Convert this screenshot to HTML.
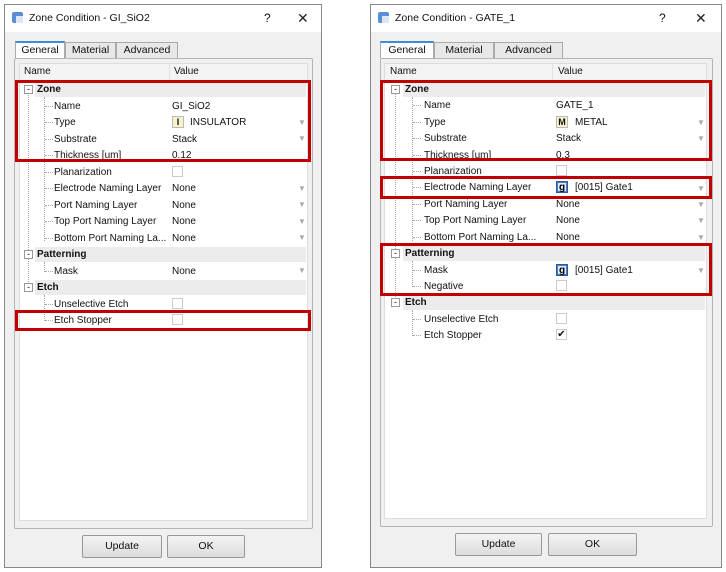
<!DOCTYPE html><html><head><style>
*{margin:0;padding:0;box-sizing:border-box}
body{width:726px;height:572px;background:#fff;position:relative;overflow:hidden;font-family:"Liberation Sans",sans-serif;font-size:10px;color:#111}
.a{position:absolute}
.dlg{position:absolute;background:#f0f0f0;border:1px solid #888}
.tb{position:absolute;left:0;right:0;top:0;height:27px;background:#fff}
.tab{position:absolute;height:16px;border:1px solid #aaa;border-bottom:none;background:#e8e8e8;text-align:center;line-height:15px;font-size:10.5px}
.tab.s{background:#fff;border-top:2px solid #3c8ddb;height:17px}
.pan{position:absolute;border:1px solid #b5b5b5;background:#f0f0f0;border-radius:2px}
.tree{position:absolute;background:#fff;border:1px solid #ddd}
.hdr{position:absolute;left:0;right:0;top:0;height:17px;background:#f4f4f4;border-bottom:1px solid #e2e2e2}
.t{position:absolute;white-space:nowrap;line-height:14px;top:0}
.g{position:absolute;background:#ececec;height:15px}
.red{position:absolute;border:3px solid #c00000}
.btn{position:absolute;border:1px solid #999;background:linear-gradient(#f4f4f4,#dcdcdc);border-radius:2px;text-align:center;font-size:10.5px}
.cb{position:absolute;width:11px;height:11px;border:1px solid #ccc;background:#fff}
.ar{position:absolute;color:#aaa;font-size:8px}
.vl{position:absolute;border-left:1px dotted #aaa}
.hl{position:absolute;border-top:1px dotted #aaa;width:8px}
.pm{position:absolute;width:9px;height:9px;border:1px solid #999;background:#fff;font-size:9px;line-height:6px;text-align:center}
.ic{position:absolute;width:12px;height:12px;border:1px solid #bbb;background:#f7f2c8;font-size:9px;font-weight:bold;text-align:center;line-height:10px}
.ig{position:absolute;width:12px;height:12px;background:#4a7fc0;border:1px solid #2b5a99;font-size:10px;font-weight:bold;text-align:center;line-height:9px;color:#000}
.ig i{display:block;background:#dfe9f7;margin:1px;height:8px;font-style:normal}
.x{position:absolute;font-size:14px;font-weight:normal;color:#222;line-height:14px}
.tr{margin-top:1px}
</style></head><body>

<!-- LEFT DIALOG -->
<div class="dlg" style="left:4px;top:4px;width:318px;height:564px">
 <div class="tb"></div>
</div>
<div class="a" style="left:12px;top:12px;width:11px;height:11px;background:#5a8fd6;border-radius:2px"></div>
<div class="a" style="left:16px;top:16px;width:7px;height:7px;background:#dbe6f4"></div>
<div class="t" style="left:29px;top:11px;font-size:10.5px">Zone Condition - GI_SiO2</div>
<div class="t" style="left:264px;top:11px;font-size:12px">?</div>
<div class="x" style="left:297px;top:11px">✕</div>
<div class="tab" style="left:65px;top:42px;width:51px">Material</div>
<div class="tab" style="left:116px;top:42px;width:62px">Advanced</div>
<div class="pan" style="left:14px;top:58px;width:299px;height:471px"></div>
<div class="tab s" style="left:15px;top:41px;width:50px">General</div>
<div class="tree" style="left:19px;top:63px;width:289px;height:458px"><div class="hdr"></div></div>
<div class="a" style="left:169px;top:64px;width:1px;height:16px;background:#e2e2e2"></div>
<div class="t" style="left:24px;top:65px">Name</div>
<div class="t" style="left:174px;top:65px">Value</div>

<div class="g" style="left:35px;top:82px;width:271px"></div>
<div class="g" style="left:35px;top:247px;width:271px"></div>
<div class="g" style="left:35px;top:280px;width:271px"></div>
<div class="vl" style="left:28px;top:92px;height:200px"></div>
<div class="vl" style="left:44px;top:97px;height:144px"></div>
<div class="vl" style="left:44px;top:262px;height:10px"></div>
<div class="vl" style="left:44px;top:295px;height:26px"></div>
<div class="pm" style="left:24px;top:85px">-</div>
<div class="pm" style="left:24px;top:250px">-</div>
<div class="pm" style="left:24px;top:283px">-</div>
<div class="t" style="left:37px;top:83px;font-weight:bold">Zone</div>
<div class="t" style="left:37px;top:248px;font-weight:bold">Patterning</div>
<div class="t" style="left:37px;top:281px;font-weight:bold">Etch</div>

<div class="hl" style="left:45px;top:106px"></div><div class="t" style="left:54px;top:100px">Name</div><div class="t" style="left:172px;top:100px">GI_SiO2</div>
<div class="hl" style="left:45px;top:122px"></div><div class="t" style="left:54px;top:116px">Type</div><div class="ic" style="left:172px;top:116px">I</div><div class="t" style="left:190px;top:116px">INSULATOR</div><div class="ar" style="left:298px;top:118px">▼</div>
<div class="hl" style="left:45px;top:139px"></div><div class="t" style="left:54px;top:133px">Substrate</div><div class="t" style="left:172px;top:133px">Stack</div><div class="ar" style="left:298px;top:134px">▼</div>
<div class="hl" style="left:45px;top:155px"></div><div class="t" style="left:54px;top:149px">Thickness [um]</div><div class="t" style="left:172px;top:149px">0.12</div>
<div class="hl" style="left:45px;top:172px"></div><div class="t" style="left:54px;top:166px">Planarization</div><div class="cb" style="left:172px;top:166px"></div>
<div class="hl" style="left:45px;top:188px"></div><div class="t" style="left:54px;top:182px">Electrode Naming Layer</div><div class="t" style="left:172px;top:182px">None</div><div class="ar" style="left:298px;top:184px">▼</div>
<div class="hl" style="left:45px;top:205px"></div><div class="t" style="left:54px;top:199px">Port Naming Layer</div><div class="t" style="left:172px;top:199px">None</div><div class="ar" style="left:298px;top:200px">▼</div>
<div class="hl" style="left:45px;top:221px"></div><div class="t" style="left:54px;top:215px">Top Port Naming Layer</div><div class="t" style="left:172px;top:215px">None</div><div class="ar" style="left:298px;top:217px">▼</div>
<div class="hl" style="left:45px;top:238px"></div><div class="t" style="left:54px;top:232px">Bottom Port Naming La...</div><div class="t" style="left:172px;top:232px">None</div><div class="ar" style="left:298px;top:233px">▼</div>
<div class="hl" style="left:45px;top:271px"></div><div class="t" style="left:54px;top:265px">Mask</div><div class="t" style="left:172px;top:265px">None</div><div class="ar" style="left:298px;top:266px">▼</div>
<div class="hl" style="left:45px;top:304px"></div><div class="t" style="left:54px;top:298px">Unselective Etch</div><div class="cb" style="left:172px;top:298px"></div>
<div class="hl" style="left:45px;top:320px"></div><div class="t" style="left:54px;top:314px">Etch Stopper</div><div class="cb" style="left:172px;top:314px"></div>

<div class="red" style="left:15px;top:80px;width:296px;height:82px"></div>
<div class="red" style="left:15px;top:310px;width:296px;height:21px"></div>

<div class="btn" style="left:82px;top:535px;width:80px;height:23px;line-height:21px">Update</div>
<div class="btn" style="left:167px;top:535px;width:78px;height:23px;line-height:21px">OK</div>

<!-- RIGHT DIALOG -->
<div class="dlg" style="left:370px;top:4px;width:352px;height:564px">
 <div class="tb"></div>
</div>
<div class="a" style="left:378px;top:12px;width:11px;height:11px;background:#5a8fd6;border-radius:2px"></div>
<div class="a" style="left:382px;top:16px;width:7px;height:7px;background:#dbe6f4"></div>
<div class="t" style="left:395px;top:11px;font-size:10.5px">Zone Condition - GATE_1</div>
<div class="t" style="left:659px;top:11px;font-size:12px">?</div>
<div class="x" style="left:695px;top:11px">✕</div>
<div class="tab" style="left:434px;top:42px;width:60px">Material</div>
<div class="tab" style="left:494px;top:42px;width:69px">Advanced</div>
<div class="pan" style="left:380px;top:58px;width:333px;height:469px"></div>
<div class="tab s" style="left:380px;top:41px;width:54px">General</div>
<div class="tree" style="left:384px;top:63px;width:323px;height:456px"><div class="hdr"></div></div>
<div class="a" style="left:552px;top:64px;width:1px;height:16px;background:#e2e2e2"></div>
<div class="t" style="left:390px;top:65px">Name</div>
<div class="t" style="left:558px;top:65px">Value</div>

<div class="g" style="left:403px;top:82px;width:302px"></div>
<div class="g" style="left:403px;top:246px;width:302px"></div>
<div class="g" style="left:403px;top:295px;width:302px"></div>
<div class="vl" style="left:395px;top:92px;height:215px"></div>
<div class="vl" style="left:412px;top:97px;height:144px"></div>
<div class="vl" style="left:412px;top:261px;height:26px"></div>
<div class="vl" style="left:412px;top:310px;height:26px"></div>
<div class="pm" style="left:391px;top:85px">-</div>
<div class="pm" style="left:391px;top:249px">-</div>
<div class="pm" style="left:391px;top:298px">-</div>
<div class="t" style="left:405px;top:83px;font-weight:bold">Zone</div>
<div class="t" style="left:405px;top:247px;font-weight:bold">Patterning</div>
<div class="t" style="left:405px;top:296px;font-weight:bold">Etch</div>

<div class="hl" style="left:413px;top:105px"></div><div class="t" style="left:424px;top:99px">Name</div><div class="t" style="left:556px;top:99px">GATE_1</div>
<div class="hl" style="left:413px;top:122px"></div><div class="t" style="left:424px;top:116px">Type</div><div class="ic" style="left:556px;top:116px">M</div><div class="t" style="left:575px;top:116px">METAL</div><div class="ar" style="left:697px;top:118px">▼</div>
<div class="hl" style="left:413px;top:138px"></div><div class="t" style="left:424px;top:132px">Substrate</div><div class="t" style="left:556px;top:132px">Stack</div><div class="ar" style="left:697px;top:134px">▼</div>
<div class="hl" style="left:413px;top:155px"></div><div class="t" style="left:424px;top:149px">Thickness [um]</div><div class="t" style="left:556px;top:149px">0.3</div>
<div class="hl" style="left:413px;top:171px"></div><div class="t" style="left:424px;top:165px">Planarization</div><div class="cb" style="left:556px;top:165px"></div>
<div class="hl" style="left:413px;top:187px"></div><div class="t" style="left:424px;top:181px">Electrode Naming Layer</div><div class="ig" style="left:556px;top:181px"><i>g</i></div><div class="t" style="left:575px;top:181px">[0015] Gate1</div><div class="ar" style="left:697px;top:184px">▼</div>
<div class="hl" style="left:413px;top:204px"></div><div class="t" style="left:424px;top:198px">Port Naming Layer</div><div class="t" style="left:556px;top:198px">None</div><div class="ar" style="left:697px;top:200px">▼</div>
<div class="hl" style="left:413px;top:220px"></div><div class="t" style="left:424px;top:214px">Top Port Naming Layer</div><div class="t" style="left:556px;top:214px">None</div><div class="ar" style="left:697px;top:216px">▼</div>
<div class="hl" style="left:413px;top:237px"></div><div class="t" style="left:424px;top:231px">Bottom Port Naming La...</div><div class="t" style="left:556px;top:231px">None</div><div class="ar" style="left:697px;top:233px">▼</div>
<div class="hl" style="left:413px;top:270px"></div><div class="t" style="left:424px;top:264px">Mask</div><div class="ig" style="left:556px;top:264px"><i>g</i></div><div class="t" style="left:575px;top:264px">[0015] Gate1</div><div class="ar" style="left:697px;top:266px">▼</div>
<div class="hl" style="left:413px;top:286px"></div><div class="t" style="left:424px;top:280px">Negative</div><div class="cb" style="left:556px;top:280px"></div>
<div class="hl" style="left:413px;top:319px"></div><div class="t" style="left:424px;top:313px">Unselective Etch</div><div class="cb" style="left:556px;top:313px"></div>
<div class="hl" style="left:413px;top:335px"></div><div class="t" style="left:424px;top:329px">Etch Stopper</div><div class="cb" style="left:556px;top:329px;font-size:10px;line-height:9px;text-align:center">✔</div>

<div class="red" style="left:380px;top:80px;width:332px;height:81px"></div>
<div class="red" style="left:380px;top:176px;width:332px;height:23px"></div>
<div class="red" style="left:380px;top:243px;width:332px;height:53px"></div>

<div class="btn" style="left:455px;top:533px;width:87px;height:23px;line-height:21px">Update</div>
<div class="btn" style="left:548px;top:533px;width:89px;height:23px;line-height:21px">OK</div>
</body></html>
